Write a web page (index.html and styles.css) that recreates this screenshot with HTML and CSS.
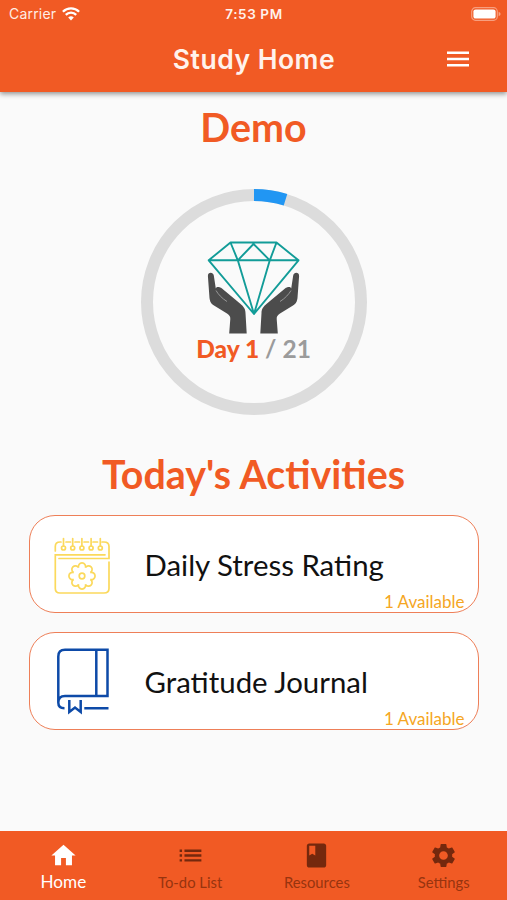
FILE: index.html
```html
<!DOCTYPE html>
<html lang="en">
<head>
<meta charset="utf-8">
<title>Study Home</title>
<link rel="stylesheet" href="styles.css">
</head>
<body>
<div class="app">
  <header class="header">
    <div class="status">
      <div class="carrier">
        <span>Carrier</span>
        <svg width="18" height="14" viewBox="0 0 18 14" fill="none" stroke="#fff" stroke-width="2.3"><path d="M.9 4.8a11.5 11.5 0 0 1 16.2 0M3.8 7.9a7.3 7.3 0 0 1 10.4 0"/><path d="M9 13.5 6.2 10.6a4 4 0 0 1 5.6 0z" fill="#fff" stroke="none"/></svg>
      </div>
      <span class="time">7:53 PM</span>
      <svg class="battery" width="30" height="14" viewBox="0 0 30 14"><rect x=".7" y=".7" width="25.6" height="12.6" rx="3.8" fill="none" stroke="#fff" stroke-opacity=".42" stroke-width="1.2"/><rect x="2.4" y="2.4" width="22.2" height="9.2" rx="2.2" fill="#fff"/><path d="M27.6 4.8q2 .8 2 2.2t-2 2.2z" fill="#fff" fill-opacity=".45"/></svg>
    </div>
    <div class="toolbar">
      <h1>Study Home</h1>
      <svg class="menu" width="22" height="16" viewBox="0 0 22 16" fill="#fff"><path d="M0 .4h22v2.6H0zM0 6.7h22v2.6H0zM0 13h22v2.6H0z"/></svg>
    </div>
  </header>

  <main class="content">
    <h2 class="demo">Demo</h2>
    <div class="progress">
      <svg class="ring" width="228" height="228" viewBox="0 0 228 228" fill="none" stroke-width="12">
        <circle cx="114" cy="114" r="107" stroke="#dcdcdc"/>
        <path d="M114 7A107 107 0 0 1 145.5 11.8" stroke="#2196f3"/>
      </svg>
      <div class="progress-body">
        <svg width="94" height="96" viewBox="206.500 240 94 96">
          <g fill="#4c4c4c">
            <path id="hand" d="M208.400 276C208.200 272 213.600 271.800 214.300 275.500L216.300 288.500C217 286.600 220 286.600 222.500 288.600L240.500 303.600C244.500 307 245.800 309 246 313L247.200 333.500H229.700L230.800 319C230.900 316.500 230 315 227.500 313.500L214.500 305.500C211.300 303.500 210.500 301.500 210 298Z"/>
            <use href="#hand" transform="matrix(-1 0 0 1 508 0)"/>
          </g>
          <g fill="none" stroke="#aaa" stroke-width=".8"><path d="M216.500 290.500C218.500 294 222.500 298.500 227.500 301.500M291.500 290.500C289.500 294 285.500 298.500 280.500 301.500"/></g>
          <path d="M231 242.500H277L299 260.300L254.500 314L209.200 260.300ZM209.200 260.300H299M231 242.500L238.300 260.300L254.500 314L270.300 260.300L277 242.500M238.300 260.300L254 244L270.300 260.300" fill="none" stroke="#129c98" stroke-width="1.900" stroke-linejoin="round"/>
        </svg>
        <p class="day"><b>Day 1</b> <span>/ 21</span></p>
      </div>
    </div>

    <h2 class="today">Today's Activities</h2>
    <div class="cards">
      <section class="card">
        <svg class="card-icon" width="60" height="60" viewBox="52 534 60 60" fill="none" stroke="#fbd95c" stroke-width="1.700" stroke-linecap="round">
          <path d="M55.300 551V546.500Q55.300 542 60 542H61M66 542H70.500M75 542H79.500M84 542H88.500M93 542H97.500M102 542H104Q109 542 109 546.500V558.500H59M105 554.800H55.300V588.500Q55.300 593 60 593H104Q109 593 109 588.500V562"/>
          <path d="M63.500 538.500V546M72.700 538.500V546M81.900 538.500V546M91.100 538.500V546M100.300 538.500V546"/>
          <circle cx="63.500" cy="548" r="2"/><circle cx="72.700" cy="548" r="2"/><circle cx="81.900" cy="548" r="2"/><circle cx="91.100" cy="548" r="2"/><circle cx="100.300" cy="548" r="2"/>
          <circle cx="82" cy="576" r="2.800"/>
          <path d="M78.600 567.700A3.600 3.600 0 1 1 85.400 567.700A3.600 3.600 0 1 1 90.300 572.600A3.600 3.600 0 1 1 90.300 579.400A3.600 3.600 0 1 1 85.400 584.300A3.600 3.600 0 1 1 78.600 584.300A3.600 3.600 0 1 1 73.700 579.400A3.600 3.600 0 1 1 73.700 572.600A3.600 3.600 0 1 1 78.600 567.700Z"/>
        </svg>
        <h3>Daily Stress Rating</h3>
        <span class="available">1 Available</span>
      </section>
      <section class="card">
        <svg class="card-icon" width="60" height="70" viewBox="52 646 60 70" fill="none" stroke="#0d4aa8" stroke-width="2.500">
          <path d="M58.300 702.500V656.500Q58.300 649.800 65 649.800H107.500V696H65Q58.300 696 58.300 702.500Q58.300 708.300 64.500 708.300M96.300 649.800V696M84.300 708.300H108.500M69.300 700V712L75 707.500L80.700 712V700"/>
        </svg>
        <h3>Gratitude Journal</h3>
        <span class="available">1 Available</span>
      </section>
    </div>
  </main>

  <nav class="nav">
    <a class="tab active"><svg viewBox="0 0 24 24"><path d="M10 20v-6h4v6h5v-8h3L12 3 2 12h3v8z"/></svg><span>Home</span></a>
    <a class="tab"><svg viewBox="0 0 24 24"><path d="M3 13h2v-2H3v2zm0 4h2v-2H3v2zm0-8h2V7H3v2zm4 4h14v-2H7v2zm0 4h14v-2H7v2zM7 7v2h14V7H7z"/></svg><span>To-do List</span></a>
    <a class="tab"><svg viewBox="0 0 24 24"><path d="M18 2H6c-1.100 0-2 .9-2 2v16c0 1.100.9 2 2 2h12c1.100 0 2-.9 2-2V4c0-1.100-.9-2-2-2zM6 4h5v8l-2.500-1.500L6 12V4z"/></svg><span>Resources</span></a>
    <a class="tab"><svg viewBox="0 0 24 24"><path d="M19.140 12.940c.04-.3.06-.61.06-.94 0-.32-.02-.64-.07-.94l2.030-1.580c.18-.14.23-.41.12-.61l-1.920-3.320c-.12-.22-.37-.29-.59-.22l-2.390.96c-.5-.38-1.030-.7-1.620-.94l-.36-2.540c-.04-.24-.24-.41-.48-.41h-3.840c-.24 0-.43.17-.47.41l-.36 2.540c-.59.24-1.130.57-1.620.94l-2.390-.96c-.22-.08-.47 0-.59.22L2.740 8.870c-.12.21-.08.47.12.61l2.030 1.580c-.05.3-.09.63-.09.94s.02.64.07.94l-2.030 1.580c-.18.14-.23.41-.12.61l1.920 3.320c.12.22.37.29.59.22l2.390-.96c.5.38 1.030.7 1.620.94l.36 2.540c.05.24.24.41.48.41h3.840c.24 0 .44-.17.47-.41l.36-2.540c.59-.24 1.130-.56 1.620-.94l2.390.96c.22.08.47 0 .59-.22l1.920-3.320c.12-.22.07-.47-.12-.61l-2.010-1.580zM12 15.600c-1.980 0-3.600-1.620-3.600-3.600s1.620-3.600 3.600-3.600 3.600 1.620 3.600 3.600-1.620 3.600-3.600 3.600z"/></svg><span>Settings</span></a>
  </nav>
</div>
</body>
</html>
```
FILE: styles.css
```css
* { box-sizing: border-box; }
body { margin: 0; font-family: Lato, "Liberation Sans", sans-serif; background: #fafafa; }
h1, h2, h3, p { margin: 0; }
svg { display: block; }

.app { width: 507px; height: 900px; display: flex; flex-direction: column; overflow: hidden; }

.header {
  height: 92px;
  flex: none;
  background: #f15a24;
  color: #fff;
  font-family: Inter, sans-serif;
  box-shadow: 0 2px 5px rgba(0, 0, 0, .42);
}
.status {
  height: 27px;
  display: grid;
  grid-template-columns: 1fr auto 1fr;
  align-items: center;
  padding: 0 6px 0 9px;
  font-size: 14px;
}
.carrier { display: flex; align-items: center; gap: 6px; letter-spacing: .2px; color: #ffede5; }
.time { font-weight: 600; font-size: 13.500px; letter-spacing: .6px; color: #fff2ec; margin-left: -2px; }
.battery { justify-self: end; }
.toolbar {
  height: 65px;
  display: grid;
  grid-template-columns: 1fr auto 1fr;
  align-items: center;
  padding-right: 38px;
  padding-left: 38px;
}
.toolbar h1 { grid-column: 2; font-size: 26.500px; font-weight: 600; line-height: 32px; letter-spacing: .5px; margin: 0 0 2px 1px; color: #fff2ec; }
.menu { justify-self: end; margin-bottom: 1px; }

.content { flex: 1; display: flex; flex-direction: column; align-items: center; }
.demo, .today { color: #f15a24; font-weight: 700; font-size: 39.400px; line-height: 48px; }
.demo { margin-top: 11px; }
.progress { display: grid; place-items: center; width: 228px; height: 228px; margin-top: 37px; }
.ring, .progress-body { grid-area: 1 / 1; }
.progress-body { display: flex; flex-direction: column; align-items: center; }
.day { font-size: 24.500px; line-height: 30px; margin-top: -2px; color: #9b9b9b; font-weight: 700; }
.day b { color: #f15a24; }
.today { margin-top: 34px; }

.cards { display: flex; flex-direction: column; gap: 19px; width: 450px; margin-top: 17px; }
.card {
  position: relative;
  height: 98px;
  display: flex;
  align-items: center;
  padding-left: 22px;
  background: #fff;
  border: 1.500px solid #ee7f58;
  border-radius: 26px;
}
.card h3 { margin: 1px 0 0 33px; font-size: 29.400px; line-height: 36px; font-weight: 400; color: #111; }
.available { position: absolute; right: 13px; bottom: 0; font-size: 17px; line-height: 20px; color: #f5a623; }

.nav { height: 69px; flex: none; display: grid; grid-template-columns: repeat(4, 1fr); background: #f15a24; }
.tab { display: flex; flex-direction: column; align-items: center; padding-top: 10px; color: #97340f; font-size: 14.800px; }
.tab svg { width: 29px; height: 29px; fill: #74280d; }
.tab span { line-height: 20px; margin-top: 2px; }
.active { color: #fff; font-size: 17.200px; }
.active svg { fill: #fff; }
```
